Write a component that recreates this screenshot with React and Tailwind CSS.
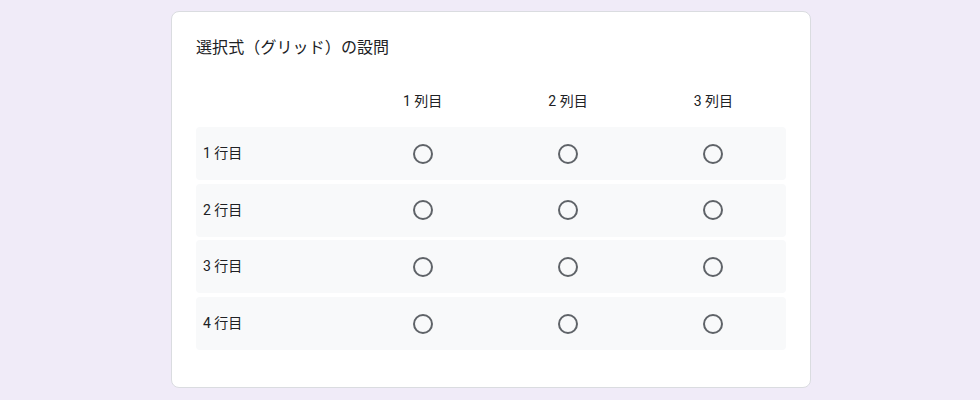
import React from "react";

const cols = ["1 列目", "2 列目", "3 列目"];
const rows = ["1 行目", "2 行目", "3 行目", "4 行目"];

function Radio() {
  return <div className="w-[20px] h-[20px] rounded-full border-2 border-[#5f6368] bg-transparent" />;
}

export default function App() {
  return (
    <div
      className="w-[980px] h-[400px] bg-[#f0ebf8] flex overflow-hidden"
      style={{ fontFamily: "Roboto, 'Noto Sans CJK JP', sans-serif" }}
    >
      <div className="ml-[171px] mt-[11px] w-[640px] h-[377px] bg-white border border-[#dadce0] rounded-[8px] px-[24px] pt-[24px] pb-[36px] text-[#202124]">
        <div className="text-[16px] leading-[24px] tracking-[0.1px]">選択式（グリッド）の設問</div>
        <div className="mt-[21px] h-[40px] grid grid-cols-[154px_1fr_1fr_1fr] items-center text-[14px]">
          <div />
          {cols.map((c) => (
            <div key={c} className="text-center">{c}</div>
          ))}
        </div>
        <div className="mt-[6px] flex flex-col gap-[3.7px]">
          {rows.map((r) => (
            <div
              key={r}
              className="h-[53px] grid grid-cols-[154px_1fr_1fr_1fr] items-center bg-[#f8f9fa] rounded-[4px] text-[14px]"
            >
              <div className="pl-[7px]">{r}</div>
              {cols.map((c) => (
                <div key={c} className="flex justify-center">
                  <Radio />
                </div>
              ))}
            </div>
          ))}
        </div>
      </div>
    </div>
  );
}
